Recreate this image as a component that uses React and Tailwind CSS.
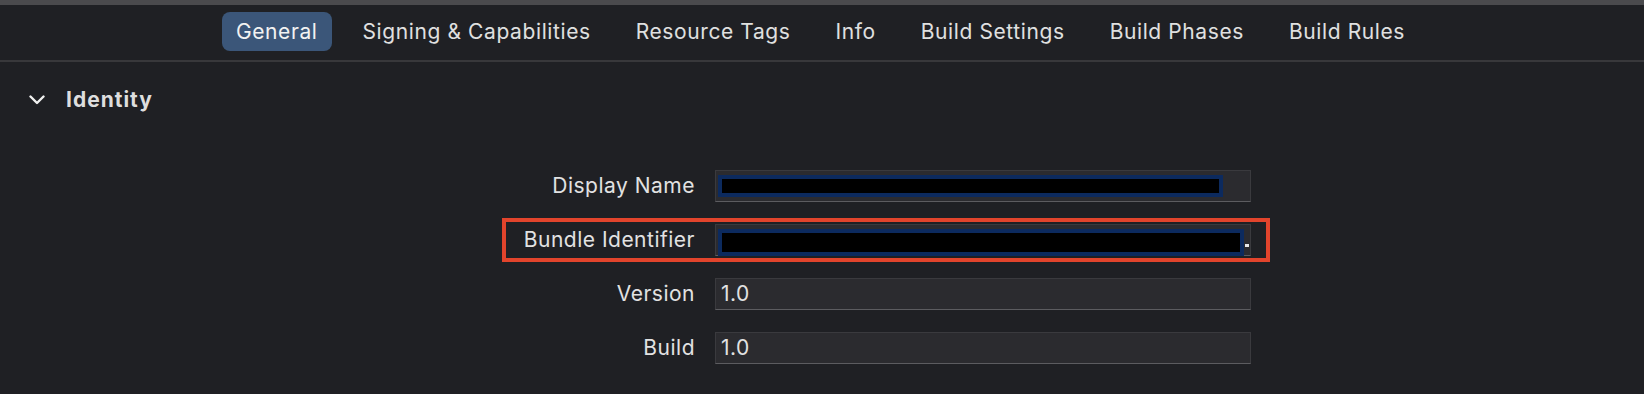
const tabs = ['General', 'Signing & Capabilities', 'Resource Tags', 'Info', 'Build Settings', 'Build Phases', 'Build Rules'];

function Field({ value, redacted }) {
  return (
    <div className="relative flex h-[32px] w-[536px] items-center border border-[#3a3a3e] border-b-[#5c5c60] bg-[#2b2b2f] pl-[5px] text-[21px] tracking-[0.5px] text-[#e2e2e2]">
      {redacted === 'name' && (
        <div className="ml-[-3px] h-[22px] w-[505px] border-[4px] border-[#0c2a5e] bg-black" />
      )}
      {redacted === 'bundle' && (
        <>
          <div className="ml-[-3px] mt-[4px] h-[27px] w-[526px] border-[4px] border-[#0c2a5e] bg-black" />
          <span className="ml-[1px] mt-[10px] h-[3px] w-[4px] bg-[#e8e8e8]" />
        </>
      )}
      {value}
    </div>
  );
}

function Row({ label, highlight, children }) {
  return (
    <div
      className={`flex items-center gap-[20px] border-[4px] py-[2px] pr-[15px] ${
        highlight ? 'border-[#e2442c]' : 'border-transparent'
      }`}
    >
      <div className="w-[189px] whitespace-nowrap text-right text-[21px] tracking-[0.5px] text-[#e2e2e2]">{label}</div>
      {children}
    </div>
  );
}

export default function App() {
  return (
    <div className="h-[394px] w-[1644px] overflow-hidden bg-[#1f2024] font-['Inter',sans-serif]">
      <div className="h-[5px] bg-[#4a4a4d]" />
      <div className="flex h-[57px] items-center border-b-2 border-[#38383b] pl-[222px]">
        <div className="flex gap-[17px] pb-[2px]">
          {tabs.map((t, i) => (
            <div
              key={t}
              className={`flex h-[39px] items-center whitespace-nowrap rounded-[8px] px-[14px] text-[21px] tracking-[0.6px] ${
                i === 0 ? 'bg-[#3b5679] text-[#f2f2f2]' : 'text-[#e0e0e0]'
              }`}
            >
              {t}
            </div>
          ))}
        </div>
      </div>
      <div className="flex h-[76px] items-center pl-[29px]">
        <svg width="16" height="10" viewBox="0 0 16 10" fill="none">
          <path d="M1.5 1.5 L8 8 L14.5 1.5" stroke="#f0f0f0" strokeWidth="2.4" strokeLinecap="round" strokeLinejoin="round" />
        </svg>
        <span className="ml-[21px] text-[21px] font-bold tracking-[1px] text-[#dedede]">Identity</span>
      </div>
      <div className="ml-[502px] mt-[26px] flex flex-col items-start gap-[10px]">
        <Row label="Display Name">
          <Field redacted="name" />
        </Row>
        <Row label="Bundle Identifier" highlight>
          <Field redacted="bundle" />
        </Row>
        <Row label="Version">
          <Field value="1.0" />
        </Row>
        <Row label="Build">
          <Field value="1.0" />
        </Row>
      </div>
    </div>
  );
}
